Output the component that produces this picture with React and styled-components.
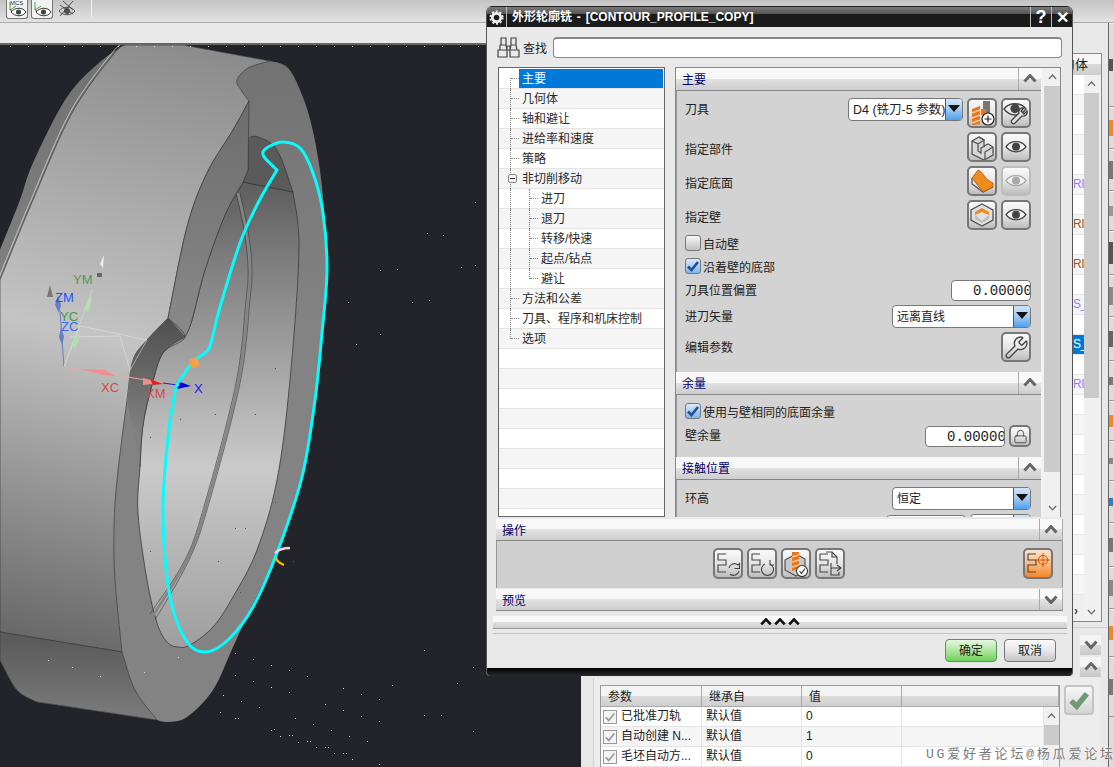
import React from 'react';
import styled, { createGlobalStyle } from 'styled-components';
import { Wrench, Lock } from 'lucide-react';

const GlobalStyle = createGlobalStyle`
  html, body { margin: 0; padding: 0; background: #e8e8e8; }
  body { font-family: "Liberation Sans", "Noto Sans CJK SC", sans-serif; font-size: 12px; color: #222; }
  * { box-sizing: border-box; }
`;

/* ---------- helpers for the model drawing ---------- */
const seg = (pts) => {
  if (pts.length === 2) return `L${pts[0][0]} ${pts[0][1]} L${pts[1][0]} ${pts[1][1]} `;
  let d = `L${pts[0][0]} ${pts[0][1]} `;
  for (let i = 0; i < pts.length - 1; i++) {
    const p0 = pts[i - 1] || pts[i];
    const p1 = pts[i];
    const p2 = pts[i + 1];
    const p3 = pts[i + 2] || p2;
    const c1x = p1[0] + (p2[0] - p0[0]) / 6;
    const c1y = p1[1] + (p2[1] - p0[1]) / 6;
    const c2x = p2[0] - (p3[0] - p1[0]) / 6;
    const c2y = p2[1] - (p3[1] - p1[1]) / 6;
    d += `C${c1x.toFixed(1)} ${c1y.toFixed(1)} ${c2x.toFixed(1)} ${c2y.toFixed(1)} ${p2[0]} ${p2[1]} `;
  }
  return d;
};
const shape = (...segs) => `M${segs[0][0][0]} ${segs[0][0][1]} ` + segs.map(seg).join('') + 'Z';
const line = (pts) => seg(pts).replace(/^L/, 'M');

const outerLeft = [[0, 250], [20, 200], [33, 163], [67, 97], [100, 62], [125, 45]];
const lightLeft = [[0, 280], [33, 200], [72, 113], [113, 55], [125, 45]];
const silhouette = shape(
  [[125, 45], [183, 45]],
  [[183, 45], [270, 61]],
  [[270, 61], [287, 67], [300, 90], [312, 127], [322, 187], [327, 270], [322, 333], [315, 400], [302, 477], [277, 553], [250, 610], [233, 647], [213, 690], [187, 717], [168, 722], [157, 720]],
  [[157, 720], [37, 702]],
  [[37, 702], [17, 690], [0, 660]],
  [[0, 660], [0, 250]],
  outerLeft
);
const cylinder = shape(
  [[125, 45], [183, 45]],
  [[183, 45], [270, 61]],
  [[270, 61], [248, 68], [237, 80], [241, 90], [249, 101]],
  [[249, 101], [233, 130], [207, 173], [187, 227], [168, 318]],
  [[168, 318], [147, 340], [133, 360], [127, 400], [117, 480], [114, 530], [115, 580], [122, 652]],
  [[122, 652], [0, 632]],
  [[0, 632], [0, 280]],
  lightLeft
);
const lowerBand = shape(
  [[122, 652], [0, 632]],
  [[0, 632], [0, 660]],
  [[0, 660], [17, 690], [37, 702]],
  [[37, 702], [157, 720]],
  [[157, 720], [135, 690], [122, 652]]
);
const holeEdge = [[293, 192], [299, 250], [290, 380], [277, 480], [257, 550], [233, 597], [213, 627], [190, 645], [178, 647], [167, 642], [157, 623], [147, 580], [138, 513], [140, 467], [143, 425], [152, 385], [163, 353], [185, 337]];
const hole = shape(
  [[243, 182], [293, 192]],
  holeEdge,
  [[185, 337], [192, 320], [205, 270], [225, 215], [243, 182]]
);
const holeTop = shape(
  [[248, 138], [258, 137], [277, 150], [293, 192]],
  [[293, 192], [243, 182]],
  [[243, 182], [248, 170]]
);
const wall = shape(
  [[249, 101], [248, 170]],
  [[248, 170], [243, 182]],
  [[243, 182], [225, 215], [205, 270], [192, 320], [185, 337]],
  [[185, 337], [168, 318]],
  [[168, 318], [187, 227], [207, 173], [233, 130], [249, 101]]
);
const notch = shape(
  [[168, 318], [185, 337]],
  [[185, 337], [163, 353], [152, 385], [143, 425], [140, 467]],
  [[140, 467], [127, 400]],
  [[127, 400], [133, 360], [147, 340], [168, 318]]
);
const toolPath = shape(
  [[277, 170], [265, 158], [263, 152], [270, 146], [283, 142], [300, 148], [313, 173], [323, 213], [327, 270], [322, 333], [315, 400], [302, 477], [277, 553], [253, 607], [230, 638], [207, 652], [187, 642], [170, 597], [163, 513], [168, 437], [175, 392], [180, 380], [193, 362], [208, 350], [213, 335], [220, 307], [240, 243], [258, 203], [277, 170]]
);

const makeDots = () => {
  const dots = [];
  for (let x = 10; x < 480; x += 11 + ((x * 7) % 9)) dots.push([x, 46]);
  const starts = [[235, 653], [235, 675], [223, 695], [220, 712], [235, 718], [262, 730]];
  starts.forEach(([sx, sy], r) => {
    for (let i = 0; i < 9; i++) {
      const x = sx + i * 18;
      const y = sy + i * 5.8;
      if (y < 767 && (i + r) % 6 !== 5) dots.push([Math.round(x), Math.round(y)]);
    }
  });
  [[475, 202], [443, 235], [427, 233], [397, 269], [380, 270], [461, 267], [475, 265], [348, 302], [412, 302], [429, 300], [380, 334], [356, 344], [324, 312], [424, 650], [473, 667], [457, 683], [441, 715], [424, 715], [473, 731], [392, 685], [275, 502], [275, 368], [215, 414], [255, 414], [180, 419], [150, 437], [293, 561], [235, 528], [245, 528], [218, 561], [240, 592], [150, 551], [40, 650], [48, 660], [72, 667], [100, 676], [144, 672], [178, 657]].forEach((d) => dots.push(d));
  return dots;
};
const dots = makeDots();

/* ---------- page frame ---------- */
const Page = styled.div`
  position: relative;
  width: 1114px;
  height: 767px;
  overflow: hidden;
  display: flex;
  flex-direction: column;
`;
const TopBar = styled.div`
  height: 23px;
  flex: none;
  display: flex;
  align-items: flex-start;
  gap: 3px;
  padding-left: 6px;
  background: linear-gradient(#c4c4c4, #e2e2e2);
  border-bottom: 1px solid #aaa;
  overflow: hidden;
`;
const TopIcon = styled.div`
  width: 22px;
  height: 19px;
  background: ${(p) => (p.$flat ? 'transparent' : '#f2f2f2')};
  border: ${(p) => (p.$flat ? 'none' : '1px solid #777')};
  border-top: none;
  border-radius: 0 0 3px 3px;
  display: flex;
  justify-content: center;
`;
const TopSep = styled.div`
  width: 1px;
  height: 17px;
  margin-left: 10px;
  background: #f4f4f4;
`;
const Main = styled.div`
  flex: 1;
  display: flex;
  min-height: 0;
`;
const LeftColumn = styled.div`
  width: 581px;
  flex: none;
  display: flex;
  flex-direction: column;
`;
const SubBar = styled.div`
  height: 22px;
  flex: none;
  background: #e9e9e9;
  border-bottom: 2px solid #666;
`;
const Viewport = styled.svg`
  flex: 1;
  display: block;
  background: #222429;
`;

/* ---------- side window under the dialog ---------- */
const SidePanel = styled.div`
  flex: 1;
  display: flex;
  background: #e8e8e8;
`;
const SideMain = styled.div`
  width: 527px;
  display: flex;
  flex-direction: column;
  padding-top: 30px;
`;
const ListBox = styled.div`
  height: 569px;
  margin: 0 6px 0 12px;
  border: 1px solid #888;
  background: #efefef;
  display: flex;
  flex-direction: column;
  flex: none;
  position: relative;
`;
const ListHeader = styled.div`
  height: 21px;
  flex: none;
  text-align: right;
  padding-right: 13px;
  line-height: 22px;
  font-size: 13px;
  background: linear-gradient(#f6f6f6 50%, #d8d8d8 50%, #cfcfcf);
`;
const ListBody = styled.div`
  flex: 1;
  display: flex;
  min-height: 0;
`;
const ListRows = styled.div`
  width: 490px;
  flex: none;
`;
const ListRow = styled.div`
  height: 20px;
  padding-left: 479px;
  background: ${(p) => (p.$odd ? '#f5f5f5' : '#fff')};
  border-bottom: 1px solid #e4e4e4;
  overflow: hidden;
`;
const ListText = styled.div`
  width: 11px;
  height: 19px;
  line-height: 19px;
  overflow: hidden;
  white-space: nowrap;
  font-size: 12px;
  letter-spacing: -0.5px;
  color: ${(p) => (p.$selected ? '#fff' : p.$color)};
  background: ${(p) => (p.$selected ? '#0078d7' : 'transparent')};
`;
const ScrollTrack = styled.div`
  width: ${(p) => p.$w || 16}px;
  flex: none;
  display: flex;
  flex-direction: column;
  align-items: center;
  background: #f0f0f0;
`;
const ScrollArrow = styled.div`
  height: ${(p) => p.$h || 18}px;
  flex: none;
  display: flex;
  align-items: center;
  justify-content: center;
`;
const ScrollThumb = styled.div`
  width: 100%;
  height: ${(p) => p.$h}px;
  flex: none;
  background: #cbcbcb;
`;
const ScrollSpacer = styled.div`
  flex: 1;
`;
const ListMark = styled.div`
  position: absolute;
  left: 480px;
  bottom: 4px;
  font-size: 12px;
  font-weight: 700;
  line-height: 12px;
  color: #444;
`;
const SideRule = styled.div`
  height: 1px;
  flex: none;
  margin: 5px 0 0 12px;
  background: #cfcfcf;
`;
const CollapseColumn = styled.div`
  flex: none;
  display: flex;
  flex-direction: column;
  align-items: flex-end;
  gap: 2px;
  padding: 7px 7px 0 0;
  height: 50px;
`;
const CollapseButton = styled.div`
  width: 21px;
  height: 20px;
  display: flex;
  align-items: center;
  justify-content: center;
  background: linear-gradient(#f4f4f4 50%, #d9d9d9 50%, #c9c9c9);
`;
const ParamPanel = styled.div`
  flex: 1;
  margin-left: 12px;
  margin-right: 7px;
  padding: 7px 0 0 6px;
  display: flex;
  gap: 4px;
  background: #ececec;
  border-left: 1px solid #d0d0d0;
`;
const ParamTable = styled.div`
  width: 460px;
  flex: none;
  border: 1px solid #999;
  border-bottom: none;
  background: #fff;
  display: flex;
  flex-direction: column;
`;
const ParamHead = styled.div`
  height: 21px;
  flex: none;
  display: grid;
  grid-template-columns: 101px 100px 100px 1fr;
  background: linear-gradient(#f4f4f4 50%, #dcdcdc 50%, #cfcfcf);
  border-bottom: 1px solid #aaa;
`;
const ParamHeadCell = styled.div`
  padding-left: 7px;
  line-height: 22px;
  border-right: 1px solid #aaa;
`;
const ParamBody = styled.div`
  flex: 1;
  display: flex;
`;
const ParamRows = styled.div`
  width: 443px;
  flex: none;
`;
const ParamRow = styled.div`
  height: 20px;
  display: grid;
  grid-template-columns: 101px 100px 100px 1fr;
  background: ${(p) => (p.$odd ? '#f5f5f5' : '#fff')};
  border-bottom: 1px solid #e4e4e4;
`;
const ParamCell = styled.div`
  display: flex;
  align-items: center;
  gap: 4px;
  padding-left: ${(p) => p.$pad ?? 4}px;
  line-height: 21px;
  border-right: 1px solid #e4e4e4;
  white-space: nowrap;
  overflow: hidden;
`;
const ParamCheck = styled.span`
  width: 14px;
  height: 14px;
  flex: none;
  border: 1px solid #999;
  background: #f4f4f4;
  display: flex;
  align-items: center;
  justify-content: center;
`;
const ApplyButton = styled.div`
  width: 30px;
  height: 30px;
  flex: none;
  border: 2px solid #c4c4c4;
  border-radius: 4px;
  background: linear-gradient(#f7f7f7, #d4d4d4);
  display: flex;
  align-items: center;
  justify-content: center;
`;
const ToolStrip = styled.div`
  flex: 1;
  border-left: 1px solid #666;
  display: flex;
  flex-direction: column;
  background: #dcdcdc;
  overflow: hidden;
`;
const StripSlot = styled.div`
  height: ${(p) => p.$h}px;
  flex: none;
  border-bottom: 1px solid #999;
  border-top: 1px solid #f4f4f4;
  display: flex;
  align-items: center;
`;
const StripMark = styled.div`
  width: 4px;
  height: ${(p) => p.$h || 14}px;
  background: ${(p) => p.$color};
`;

/* ---------- dialog ---------- */
const Dialog = styled.div`
  position: absolute;
  left: 486px;
  top: 6px;
  width: 587px;
  height: 670px;
  display: flex;
  flex-direction: column;
  background: #e9e9e9;
  border-radius: 6px 6px 4px 4px;
  overflow: hidden;
  border-left: 1px solid #555;
  border-right: 1px solid #555;
`;
const TitleBar = styled.div`
  height: 21px;
  flex: none;
  display: flex;
  align-items: center;
  background: linear-gradient(#7a7a7a, #555 35%, #1b1b1b 36%, #1b1b1b);
  border-top: 1px solid #222;
`;
const GearBox = styled.div`
  width: 20px;
  height: 100%;
  display: flex;
  align-items: center;
  justify-content: center;
  border-right: 1px solid #bbb;
`;
const TitleText = styled.div`
  flex: 1;
  padding-left: 5px;
  color: #fff;
  font-weight: 700;
  font-size: 12px;
  line-height: 17px;
  word-spacing: 1.5px;
`;
const TitleButton = styled.div`
  width: 21px;
  height: 100%;
  display: flex;
  align-items: center;
  justify-content: center;
  border-left: 1px solid #bbb;
  color: #fff;
  font-weight: 700;
  font-size: ${(p) => p.$size}px;
`;
const DialogBody = styled.div`
  flex: 1;
  min-height: 0;
  display: flex;
  flex-direction: column;
`;
const FindRow = styled.div`
  height: 21px;
  flex: none;
  margin: 10px 10px 0 10px;
  display: flex;
  align-items: center;
`;
const FindLabel = styled.span`
  width: 30px;
  margin-left: 3px;
  font-size: 12px;
`;
const FindInput = styled.div`
  flex: 1;
  height: 21px;
  background: #fff;
  border: 1px solid #888;
  border-top-width: 2px;
  border-radius: 4px;
`;
const ContentRow = styled.div`
  height: 450px;
  flex: none;
  margin: 9px 0 0 11px;
  display: flex;
  gap: 10px;
`;
const Tree = styled.div`
  position: relative;
  width: 167px;
  flex: none;
  border: 1px solid #666;
  padding-top: 1px;
  background: #fff;
  overflow: hidden;
`;
const TreeRow = styled.div`
  position: relative;
  height: 20px;
  display: flex;
  padding-right: 1px;
  background: ${(p) => (p.$odd ? '#f5f5f5' : '#fff')};
  border-bottom: 1px solid #e4e4e4;
`;
const TreeLabel = styled.div`
  flex: 1;
  margin-left: ${(p) => (p.$level === 2 ? 39 : 20)}px;
  padding-left: 3px;
  line-height: 21px;
  color: ${(p) => (p.$selected ? '#fff' : '#2a2a2a')};
  background: ${(p) => (p.$selected ? '#0078d7' : 'transparent')};
`;
const HLine = styled.span`
  position: absolute;
  left: ${(p) => p.$x}px;
  top: 9px;
  width: 8px;
  border-top: 1px dotted #888;
`;
const VLine = styled.span`
  position: absolute;
  left: ${(p) => p.$x}px;
  top: ${(p) => p.$top}px;
  height: ${(p) => p.$h}px;
  border-left: 1px dotted #888;
`;
const Expander = styled.span`
  position: absolute;
  left: 9px;
  top: 5px;
  width: 9px;
  height: 9px;
  background: #f4f4f4;
  border: 1px solid #888;
  border-radius: 2px;
  &::after {
    content: '';
    position: absolute;
    left: 1px;
    top: 3px;
    width: 5px;
    height: 1px;
    background: #333;
  }
`;
const Pane = styled.div`
  width: 386px;
  flex: none;
  display: flex;
  gap: 3px;
  border: 1px solid #888;
  border-bottom: none;
  background: #f2f2f2;
  overflow: hidden;
`;
const Sections = styled.div`
  width: 365px;
  flex: none;
`;
const SectionHeader = styled.div`
  height: 23px;
  display: flex;
  background: linear-gradient(#f8f8f8 50%, #e2e2e2 50%, #cdcdcd);
  border-bottom: 1px solid #888;
`;
const SectionTitle = styled.div`
  flex: 1;
  padding-left: 6px;
  line-height: 24px;
  color: #000066;
`;
const SectionToggle = styled.div`
  width: 23px;
  flex: none;
  display: flex;
  align-items: center;
  justify-content: center;
  border-left: 1px solid #aaa;
`;
const SectionBody = styled.div`
  background: #d3d3d3;
  border-left: 1px solid #999;
  padding: ${(p) => p.$pt}px 10px ${(p) => p.$pb}px 8px;
  display: flex;
  flex-direction: column;
  gap: 4px;
`;
const Row = styled.div`
  height: ${(p) => p.$h}px;
  flex: none;
  display: flex;
  align-items: ${(p) => (p.$top ? 'flex-start' : 'center')};
  gap: 4px;
`;
const RowLabel = styled.div`
  flex: 1;
  line-height: ${(p) => (p.$tall ? '24px' : '18px')};
  margin-top: ${(p) => p.$mt ?? 1}px;
`;
const Select = styled.div`
  width: ${(p) => p.$w}px;
  height: 23px;
  flex: none;
  display: flex;
  background: #fff;
  border: 1px solid #777;
  border-radius: 4px;
  overflow: hidden;
`;
const SelectText = styled.div`
  flex: 1;
  padding-left: 4px;
  line-height: 22px;
  font-size: ${(p) => p.$size || 12}px;
  white-space: nowrap;
  overflow: hidden;
`;
const SelectArrow = styled.div`
  width: 17px;
  flex: none;
  display: flex;
  align-items: flex-start;
  justify-content: center;
  padding-top: 6px;
  border-left: 1px solid #2a62a8;
  background: linear-gradient(#cfe3f8, #a8cef4 45%, #4f9fee);
`;
const ArrowGlyph = styled.span`
  width: 0;
  height: 0;
  border-left: 6px solid transparent;
  border-right: 6px solid transparent;
  border-top: 7px solid #111;
`;
const NumberField = styled.div`
  width: 80px;
  height: ${(p) => p.$h || 21}px;
  flex: none;
  padding-left: 21px;
  background: #fff;
  border: 1px solid #777;
  border-radius: 4px;
  font-family: "Liberation Mono", monospace;
  font-size: 14px;
  line-height: 20px;
  overflow: hidden;
  white-space: nowrap;
`;
const IconButton = styled.div`
  width: ${(p) => p.$w || 30}px;
  height: ${(p) => p.$hh || 30}px;
  flex: none;
  display: flex;
  align-items: center;
  justify-content: center;
  color: #444;
  border: 2px solid ${(p) => (p.$faded ? '#bdbdbd' : '#777')};
  border-radius: 5px;
  background: ${(p) =>
    p.$active
      ? 'linear-gradient(#fbe6d0 0, #f9c08a 45%, #f5862a)'
      : 'linear-gradient(#fafafa, #e6e6e6 50%, #bdbdbd)'};
`;
const CheckRow = styled.div`
  height: ${(p) => p.$h}px;
  flex: none;
  display: flex;
  align-items: center;
  gap: 2px;
`;
const CheckBox = styled.span`
  width: 16px;
  height: 16px;
  flex: none;
  display: flex;
  align-items: center;
  justify-content: center;
  border: 1px solid #777;
  border-radius: 3px;
  background: ${(p) =>
    p.$checked ? 'linear-gradient(#dbe9f8, #7db4ea)' : 'linear-gradient(#f8f8f8, #bfbfbf)'};
`;
const OpsBlock = styled.div`
  width: 567px;
  flex: none;
  margin: 2px 0 0 9px;
  background: #e9e9e9;
`;
const OpsHeader = styled.div`
  height: 22px;
  display: flex;
  background: linear-gradient(#f8f8f8 50%, #e2e2e2 50%, #cdcdcd);
  border-bottom: 1px solid #888;
  border-right: 1px solid #aaa;
`;
const OpsBody = styled.div`
  height: 47px;
  display: flex;
  padding: 7px 9px 0 216px;
  gap: 4px;
  background: #cfcfcf;
  border-left: 1px solid #999;
  border-right: 1px solid #999;
`;
const OpsSpacer = styled.div`
  flex: 1;
`;
const PreviewHeader = styled(OpsHeader)`
  margin-top: 1px;
`;
const MoreBar = styled.div`
  width: 574px;
  height: 13px;
  flex: none;
  margin: 5px 0 0 6px;
  display: flex;
  align-items: center;
  justify-content: center;
  gap: 2px;
  background: linear-gradient(#f8f8f8 50%, #e0e0e0 50%, #cfcfcf);
  border-bottom: 1px solid #999;
`;
const DialogRule = styled.div`
  width: 574px;
  height: 1px;
  flex: none;
  margin: 4px 0 0 6px;
  background: #c4c4c4;
`;
const ButtonRow = styled.div`
  flex: none;
  margin-top: 5px;
  padding-right: 16px;
  display: flex;
  justify-content: flex-end;
  gap: 7px;
`;
const DialogButton = styled.div`
  width: 52px;
  height: 23px;
  text-align: center;
  line-height: 23px;
  border: 1px solid ${(p) => (p.$ok ? '#5f8f5a' : '#777')};
  border-radius: 4px;
  background: ${(p) =>
    p.$ok
      ? 'linear-gradient(#e6f6e0, #b6e8a6 45%, #6fd15c)'
      : 'linear-gradient(#fafafa, #e8e8e8 50%, #c4c4c4)'};
`;
const BottomBand = styled.div`
  height: 8px;
  flex: none;
  background: linear-gradient(#000, #2a2a2a);
`;
const Watermark = styled.div`
  position: absolute;
  right: 0;
  bottom: 4px;
  width: 188px;
  font-family: "Liberation Mono", "Noto Sans CJK SC", monospace;
  font-size: 13px;
  line-height: 16px;
  letter-spacing: 2.8px;
  white-space: nowrap;
  color: #7c7c7c;
  text-shadow: 0 0 2px #fff;
`;

/* ---------- drawn icons ---------- */
const Chevron = ({ down, size = 14, weight = 3, color = '#666' }) => (
  <svg width={size} height={size * 0.65} viewBox="0 0 14 9">
    <polyline
      points={down ? '1.5,1.5 7,7.5 12.5,1.5' : '1.5,7.5 7,1.5 12.5,7.5'}
      fill="none"
      stroke={color}
      strokeWidth={weight}
    />
  </svg>
);

const Eye = ({ faded, size = 22 }) => (
  <svg width={size} height={size * 0.7} viewBox="0 0 24 17">
    <path d="M1 8.5C6 1 18 1 23 8.5C18 16 6 16 1 8.5Z" fill="#f2f2f2" stroke={faded ? '#aaa' : '#444'} strokeWidth="1.4" />
    <circle cx="12" cy="8.5" r="4.4" fill={faded ? '#aaa' : '#444'} />
  </svg>
);

const Gear = () => (
  <svg width="15" height="15" viewBox="0 0 16 16">
    <circle cx="8" cy="8" r="4.5" fill="none" stroke="#eee" strokeWidth="3" />
    <circle cx="8" cy="8" r="6.6" fill="none" stroke="#eee" strokeWidth="2" strokeDasharray="2.2 2" />
  </svg>
);

const Binoculars = () => (
  <svg width="23" height="23" viewBox="0 0 23 23" fill="none" stroke="#444" strokeWidth="1.2">
    <path d="M4 2h5v7H4zM14 2h5v7h-5zM3 9l1 0h5l1 5H3zM13 14l1-5h5l1 5zM1 14h9v7H1zM13 14h9v7h-9zM10 10h3v4h-3z" />
  </svg>
);

const Check = ({ color = '#1f4f96', size = 14, weight = 2.6 }) => (
  <svg width={size} height={size} viewBox="0 0 14 14">
    <polyline points="2,7.5 5.5,11 12,3" fill="none" stroke={color} strokeWidth={weight} />
  </svg>
);

const CreateToolIcon = () => (
  <svg width="26" height="26" viewBox="0 0 26 26">
    <rect x="14" y="1" width="7" height="12" fill="#777" />
    <path d="M3 9l8-3v18l-8 1z" fill="#e8761c" />
    <path d="M3 13l8-3M3 18l8-3M3 23l8-3" stroke="#f4c9a0" strokeWidth="1.5" />
    <rect x="12" y="9" width="5" height="6" fill="#e8761c" />
    <circle cx="19" cy="19" r="6" fill="#fff" stroke="#222" strokeWidth="1.2" />
    <path d="M19 15.5v7M15.5 19h7" stroke="#222" strokeWidth="1.2" />
  </svg>
);

const EyeWrenchIcon = () => (
  <svg width="26" height="26" viewBox="0 0 26 26" fill="none" stroke="#444" strokeWidth="1.3">
    <path d="M1 9C6 2 18 2 23 9C20 13 16 15 12 15C8 15 4 13 1 9Z" />
    <circle cx="12" cy="8.5" r="4" fill="#444" />
    <path d="M24 11a4 4 0 0 1-5 5l-7 7a2 2 0 0 1-3-3l7-7a4 4 0 0 1 5-5l-3 3 3 3z" fill="#e2e2e2" />
  </svg>
);

const PartIcon = () => (
  <svg width="26" height="26" viewBox="0 0 26 26" fill="#d8d8d8" stroke="#555" strokeWidth="1.3">
    <path d="M3 7l7-4 5 3v6l4-2 5 3v8l-9 5-12-6z" />
    <path d="M3 7l6 3v7l3 2v-5l4-2M10 3l5 3-6 4M16 25v-7l8-5" fill="none" />
  </svg>
);

const FloorIcon = () => (
  <svg width="26" height="26" viewBox="0 0 26 26">
    <path d="M3 10v6l11 8 10-5" fill="#e4e4e4" stroke="#555" strokeWidth="1.3" />
    <path d="M3 10L9 2c5 1 6 9 15 13v4l-10 5z" fill="#ee8a1e" stroke="#a85a10" strokeWidth="0.8" />
  </svg>
);

const WallIcon = () => (
  <svg width="26" height="26" viewBox="0 0 26 26">
    <path d="M13 2l11 6v10l-11 6-11-6V8z" fill="#e0e0e0" stroke="#555" strokeWidth="1.3" />
    <path d="M13 6l7 4v3l-7-3-7 3v-3z" fill="#ee8a1e" />
    <path d="M6 13l7 6 7-6v4l-7 4-7-4z" fill="#bcbcbc" />
  </svg>
);

const Flow = () => (
  <path d="M11 3H3v6h8v5H3v7h8" fill="none" stroke="#444" strokeWidth="1.1" />
);

const RegenIcon = () => (
  <svg width="26" height="26" viewBox="0 0 26 26" fill="none" stroke="#444" strokeWidth="1.1">
    <Flow />
    <path d="M14 17a5.5 5.5 0 0 1 9-3l1.5-1.5v5h-5M24 20a5.5 5.5 0 0 1-9 3" />
  </svg>
);

const ReplayIcon = () => (
  <svg width="26" height="26" viewBox="0 0 26 26" fill="none" stroke="#444" strokeWidth="1.1">
    <Flow />
    <path d="M21 13a6 6 0 1 1-5 0M21 9v5h4" />
  </svg>
);

const VerifyIcon = () => (
  <svg width="26" height="26" viewBox="0 0 26 26">
    <path d="M2 9l11-6 9 5v11l-9 6-11-6z" fill="#c8c8c8" stroke="#555" strokeWidth="1.2" />
    <path d="M9 1h7v17l-7 2z" fill="#e8761c" />
    <path d="M9 6l7-2M9 11l7-2M9 16l7-2" stroke="#f4c9a0" strokeWidth="1.4" />
    <circle cx="19" cy="20" r="5.5" fill="#fff" stroke="#333" strokeWidth="1.1" />
    <polyline points="16.5,20 18.5,22.5 22,17.5" fill="none" stroke="#333" strokeWidth="1.2" />
  </svg>
);

const ListIcon = () => (
  <svg width="26" height="26" viewBox="0 0 26 26" fill="none" stroke="#444" strokeWidth="1.1">
    <Flow />
    <path d="M9 1h6l5 5v7M15 1v5h5M14 17h9M20 14l4 3-4 3M14 12v12h8v-3" />
  </svg>
);

const PathCrossIcon = () => (
  <svg width="26" height="26" viewBox="0 0 26 26" fill="none" stroke="#333" strokeWidth="1.1">
    <Flow />
    <circle cx="18" cy="9" r="4.5" stroke="#d85c00" />
    <path d="M18 2v14M11 9h14" stroke="#d85c00" />
  </svg>
);

const TopMcsIcon = ({ mcs }) => (
  <svg width="20" height="18" viewBox="0 0 20 18">
    {mcs && (
      <text x="3" y="5" fontSize="6" fontFamily="Liberation Sans" fill="#333">
        MCS
      </text>
    )}
    <path d="M3 10L9 6M3 2v8" stroke="#2a9a3c" strokeWidth="0.9" fill="none" />
    <path d="M3 10l5 2" stroke="#c03030" strokeWidth="0.9" />
    <path d="M4 12C8 7 16 7 19 12C16 17 8 17 4 12Z" fill="#fff" stroke="#333" strokeWidth="1" />
    <circle cx="11.5" cy="12" r="2.6" fill="#444" />
  </svg>
);

const TopHiddenIcon = () => (
  <svg width="18" height="18" viewBox="0 0 18 18" fill="none" stroke="#444" strokeWidth="0.9">
    <path d="M1 11C5 6 13 6 17 11C13 16 5 16 1 11Z" />
    <circle cx="9" cy="11" r="2.6" fill="#555" />
    <path d="M2 16L15 1M2 5l13 9M5 1l10 9" />
  </svg>
);

/* ---------- data ---------- */
const treeItems = [
  { label: '主要', level: 1, selected: true },
  { label: '几何体', level: 1 },
  { label: '轴和避让', level: 1 },
  { label: '进给率和速度', level: 1 },
  { label: '策略', level: 1 },
  { label: '非切削移动', level: 1, expander: true },
  { label: '进刀', level: 2 },
  { label: '退刀', level: 2 },
  { label: '转移/快速', level: 2 },
  { label: '起点/钻点', level: 2 },
  { label: '避让', level: 2, lastChild: true },
  { label: '方法和公差', level: 1 },
  { label: '刀具、程序和机床控制', level: 1 },
  { label: '选项', level: 1, lastRoot: true },
  ...Array.from({ length: 9 }, () => ({ label: '', level: 0 }))
];

const listMarks = {
  5: { text: 'RI', color: '#9a7cff' },
  7: { text: 'RI', color: '#9c5a20' },
  9: { text: 'RI', color: '#9c5a20' },
  11: { text: 'S_', color: '#9a7cff' },
  13: { text: 'S_', color: '#fff', selected: true },
  15: { text: 'RI', color: '#9a7cff' }
};

const params = [
  { name: '已批准刀轨', from: '默认值', value: '0' },
  { name: '自动创建 N...', from: '默认值', value: '1' },
  { name: '毛坯自动方...', from: '默认值', value: '0' }
];

const strip = [
  { h: 84, color: '#555', mh: 12 },
  { h: 42, color: '#ee8a1e', mh: 16 },
  { h: 42, color: '#777', mh: 18 },
  { h: 40, color: '#999', mh: 10 },
  { h: 44, color: '#555', mh: 22 },
  { h: 42, color: '#888', mh: 18 },
  { h: 44, color: '#666', mh: 16 },
  { h: 40, color: '#777', mh: 8 },
  { h: 40, color: '#ee8a1e', mh: 12 },
  { h: 40, color: '#888', mh: 6 },
  { h: 42, color: '#2a7fd0', mh: 8 },
  { h: 44, color: '#777', mh: 14 },
  { h: 42, color: '#888', mh: 16 },
  { h: 48, color: '#ee8a1e', mh: 14 },
  { h: 60, color: '#777', mh: 16 }
];

/* ---------- pieces ---------- */
const ModelView = () => (
  <Viewport viewBox="0 45 581 722" preserveAspectRatio="xMinYMin slice">
    <defs>
      <linearGradient id="cyl" gradientUnits="userSpaceOnUse" x1="200" y1="50" x2="60" y2="640">
        <stop offset="0" stopColor="#8c8c8c" />
        <stop offset="0.5" stopColor="#c4c4c4" />
        <stop offset="1" stopColor="#6a6a6a" />
      </linearGradient>
      <linearGradient id="band" gradientUnits="userSpaceOnUse" x1="0" y1="640" x2="0" y2="720">
        <stop offset="0" stopColor="#5b5b5b" />
        <stop offset="1" stopColor="#7c7c7c" />
      </linearGradient>
      <linearGradient id="face" gradientUnits="userSpaceOnUse" x1="0" y1="60" x2="0" y2="330">
        <stop offset="0" stopColor="#727272" />
        <stop offset="1" stopColor="#838383" />
      </linearGradient>
      <linearGradient id="bore" gradientUnits="userSpaceOnUse" x1="0" y1="185" x2="0" y2="640">
        <stop offset="0" stopColor="#5e5e5e" />
        <stop offset="0.17" stopColor="#7e7e7e" />
        <stop offset="0.62" stopColor="#cacaca" />
        <stop offset="1" stopColor="#a0a0a0" />
      </linearGradient>
      <linearGradient id="wallGrad" gradientUnits="userSpaceOnUse" x1="0" y1="100" x2="0" y2="340">
        <stop offset="0" stopColor="#6c6c6c" />
        <stop offset="1" stopColor="#8a8a8a" />
      </linearGradient>
      <linearGradient id="notchGrad" gradientUnits="userSpaceOnUse" x1="0" y1="320" x2="0" y2="430">
        <stop offset="0" stopColor="#505050" />
        <stop offset="1" stopColor="#808080" />
      </linearGradient>
    </defs>

    <path d={silhouette} fill="url(#face)" />
    <path d={cylinder} fill="url(#cyl)" stroke="#3c3c3c" strokeWidth="0.7" />
    <path d={line(lightLeft.map(([x, y]) => [x - 1.5, y - 1.5]))} fill="none" stroke="#e4e4e4" strokeWidth="0.7" />
    <path d={lowerBand} fill="url(#band)" stroke="#3c3c3c" strokeWidth="0.7" />
    <path d={hole} fill="url(#bore)" stroke="#3a3a3a" strokeWidth="0.8" />
    <path d={holeTop} fill="#5a5a5a" stroke="#3a3a3a" strokeWidth="0.8" />
    <path d={wall} fill="url(#wallGrad)" stroke="#3c3c3c" strokeWidth="0.7" />
    <path d={notch} fill="url(#notchGrad)" />
    <path d={line([[168, 318], [185, 337], [163, 353], [152, 385], [143, 425], [140, 467]])} fill="none" stroke="#3c3c3c" strokeWidth="0.7" />

    <path d={line([[238, 193], [246, 230], [250, 267], [248, 300], [238, 383], [207, 503], [187, 560], [152, 617]])} fill="none" stroke="#858585" strokeWidth="2.6" />
    <path d={line([[236, 193], [244, 230], [248, 267], [246, 300], [236, 383], [205, 503], [185, 560], [150, 614]])} fill="none" stroke="#454545" strokeWidth="0.7" />
    <path d={line([[240, 193], [248, 230], [252, 267], [250, 300], [240, 383], [209, 503], [189, 560], [155, 620]])} fill="none" stroke="#454545" strokeWidth="0.7" />

    {dots.map(([x, y], i) => (
      <rect key={i} x={x} y={y} width="1" height="1" fill={y < 50 || x > 320 || y > 650 ? '#d8d8d8' : '#555'} />
    ))}

    <g fill="none" stroke="#e8e8e8" strokeWidth="0.7" opacity="0.75">
      <path d="M64 367L80 326L147 340L129 372" />
      <path d="M70 337L120 336L130 370" />
    </g>
    <path d="M64 367L60 310" stroke="#6a7fc0" strokeWidth="1" />
    <path d="M59 337l2-10 3 10-2 8zM55 305l3-10 3 10-2 8z" fill="#6680c8" />
    <path d="M64 367L92 290" stroke="#bfe0bf" strokeWidth="1" />
    <path d="M72 345l4-9 4 1-5 12zM85 310l6-19 1 10-4 11z" fill="#b4dcb0" />
    <path d="M64 367L165 383" stroke="#eba8a8" strokeWidth="1" />
    <path d="M80 369l25 1 10 6-12-1zM143 378l20 5-20 2z" fill="#f08e8e" />
    <path d="M150 379l13 5-10 1z" fill="#e02020" />
    <path d="M163 383L177 385" stroke="#2222cc" strokeWidth="1" />
    <path d="M177 381l14 5-14 3z" fill="#0000dd" />
    <rect x="176" y="383" width="3" height="3" fill="#fff" />
    <path d="M100 264l4-9-1 13z" fill="#eee" />
    <rect x="97" y="273" width="5" height="4" fill="#666" />
    <path d="M50 285l3 12h-6z" fill="#777" />
    <g fontFamily="Liberation Sans" fontSize="13">
      <text x="73" y="284" fill="#559955">YM</text>
      <text x="55" y="302" fill="#2255ff">ZM</text>
      <text x="60" y="321" fill="#4a9a4a">YC</text>
      <text x="61" y="331" fill="#3a6aff">ZC</text>
      <text x="101" y="392" fill="#d84848">XC</text>
      <text x="146" y="398" fill="#d84848">XM</text>
      <text x="194" y="393" fill="#1a1ae8">X</text>
    </g>

    <path d={toolPath} fill="none" stroke="#00ffff" strokeWidth="3" strokeLinejoin="round" />
    <circle cx="194" cy="363" r="5" fill="#f5a04a" />
    <path d="M275 553C279 549 284 548 290 548" fill="none" stroke="#f5d0dc" strokeWidth="2.4" />
    <path d="M276 557C276 561 279 563 284 565" fill="none" stroke="#f5b800" strokeWidth="2.4" />
  </Viewport>
);

const SideWindow = () => (
  <SidePanel>
    <SideMain>
      <ListBox>
        <ListHeader>刀体</ListHeader>
        <ListBody>
          <ListRows>
            {Array.from({ length: 26 }, (_, i) => (
              <ListRow key={i} $odd={i % 2 === 1}>
                {listMarks[i] && (
                  <ListText $color={listMarks[i].color} $selected={listMarks[i].selected}>
                    {listMarks[i].text}
                  </ListText>
                )}
              </ListRow>
            ))}
          </ListRows>
          <ScrollTrack $w={15}>
            <ScrollArrow $h={18}>
              <Chevron size={9} weight={2} />
            </ScrollArrow>
            <ScrollThumb $h={305} />
            <ScrollSpacer />
            <ScrollArrow $h={18}>
              <Chevron down size={9} weight={2} />
            </ScrollArrow>
          </ScrollTrack>
        </ListBody>
        <ListMark>›</ListMark>
      </ListBox>
      <SideRule />
      <CollapseColumn>
        <CollapseButton>
          <Chevron down />
        </CollapseButton>
        <CollapseButton>
          <Chevron />
        </CollapseButton>
      </CollapseColumn>
      <ParamPanel>
        <ParamTable>
          <ParamHead>
            <ParamHeadCell>参数</ParamHeadCell>
            <ParamHeadCell>继承自</ParamHeadCell>
            <ParamHeadCell>值</ParamHeadCell>
            <ParamHeadCell />
          </ParamHead>
          <ParamBody>
            <ParamRows>
              {params.map((p, i) => (
                <ParamRow key={p.name} $odd={i % 2 === 1}>
                  <ParamCell $pad={2}>
                    <ParamCheck>
                      <Check color="#999" size={12} weight={2} />
                    </ParamCheck>
                    {p.name}
                  </ParamCell>
                  <ParamCell>{p.from}</ParamCell>
                  <ParamCell>{p.value}</ParamCell>
                  <ParamCell />
                </ParamRow>
              ))}
            </ParamRows>
            <ScrollTrack $w={15}>
              <ScrollArrow $h={18}>
                <Chevron size={9} weight={2} />
              </ScrollArrow>
              <ScrollThumb $h={20} />
            </ScrollTrack>
          </ParamBody>
        </ParamTable>
        <ApplyButton>
          <Check color="#6e9a72" size={22} weight={3.4} />
        </ApplyButton>
      </ParamPanel>
    </SideMain>
    <ToolStrip>
      {strip.map((s, i) => (
        <StripSlot key={i} $h={s.h}>
          <StripMark $color={s.color} $h={s.mh} />
        </StripSlot>
      ))}
    </ToolStrip>
  </SidePanel>
);

const OperationDialog = () => (
  <Dialog>
    <TitleBar>
      <GearBox>
        <Gear />
      </GearBox>
      <TitleText>外形轮廓铣 - [CONTOUR_PROFILE_COPY]</TitleText>
      <TitleButton $size={18}>?</TitleButton>
      <TitleButton $size={16}>✕</TitleButton>
    </TitleBar>
    <DialogBody>
      <FindRow>
        <Binoculars />
        <FindLabel>查找</FindLabel>
        <FindInput />
      </FindRow>
      <ContentRow>
        <Tree>
          {treeItems.map((item, i) => (
            <TreeRow key={i} $odd={i % 2 === 1}>
              {item.level > 0 && !item.lastRoot && <VLine $x={11} $top={i === 0 ? 9 : 0} $h={i === 0 ? 11 : 20} />}
              {item.lastRoot && <VLine $x={11} $top={0} $h={10} />}
              {item.level === 1 && !item.expander && <HLine $x={12} />}
              {item.level === 2 && <VLine $x={30} $top={0} $h={item.lastChild ? 10 : 20} />}
              {item.level === 2 && <HLine $x={31} />}
              {item.expander && <Expander />}
              <TreeLabel $level={item.level} $selected={item.selected}>
                {item.label}
              </TreeLabel>
            </TreeRow>
          ))}
        </Tree>
        <Pane>
          <Sections>
            <SectionHeader>
              <SectionTitle>主要</SectionTitle>
              <SectionToggle>
                <Chevron />
              </SectionToggle>
            </SectionHeader>
            <SectionBody $pt={7} $pb={10}>
              <Row $h={30} $top>
                <RowLabel $tall $mt={0}>刀具</RowLabel>
                <Select $w={115}>
                  <SelectText $size={12.5}>D4 (铣刀-5 参数)</SelectText>
                  <SelectArrow>
                    <ArrowGlyph />
                  </SelectArrow>
                </Select>
                <IconButton>
                  <CreateToolIcon />
                </IconButton>
                <IconButton>
                  <EyeWrenchIcon />
                </IconButton>
              </Row>
              <Row $h={30}>
                <RowLabel $mt={6}>指定部件</RowLabel>
                <IconButton>
                  <PartIcon />
                </IconButton>
                <IconButton>
                  <Eye />
                </IconButton>
              </Row>
              <Row $h={30}>
                <RowLabel $mt={5}>指定底面</RowLabel>
                <IconButton>
                  <FloorIcon />
                </IconButton>
                <IconButton $faded>
                  <Eye faded />
                </IconButton>
              </Row>
              <Row $h={30}>
                <RowLabel $mt={6}>指定壁</RowLabel>
                <IconButton>
                  <WallIcon />
                </IconButton>
                <IconButton>
                  <Eye />
                </IconButton>
              </Row>
              <CheckRow $h={18}>
                <CheckBox />
                自动壁
              </CheckRow>
              <CheckRow $h={20}>
                <CheckBox $checked>
                  <Check />
                </CheckBox>
                沿着壁的底部
              </CheckRow>
              <Row $h={21}>
                <RowLabel>刀具位置偏置</RowLabel>
                <NumberField>0.00000</NumberField>
              </Row>
              <Row $h={23}>
                <RowLabel>进刀矢量</RowLabel>
                <Select $w={139}>
                  <SelectText>远离直线</SelectText>
                  <SelectArrow>
                    <ArrowGlyph />
                  </SelectArrow>
                </Select>
              </Row>
              <Row $h={30}>
                <RowLabel>编辑参数</RowLabel>
                <IconButton>
                  <Wrench size={25} strokeWidth={1.3} />
                </IconButton>
              </Row>
            </SectionBody>
            <SectionHeader>
              <SectionTitle>余量</SectionTitle>
              <SectionToggle>
                <Chevron />
              </SectionToggle>
            </SectionHeader>
            <SectionBody $pt={6} $pb={10}>
              <CheckRow $h={20}>
                <CheckBox $checked>
                  <Check />
                </CheckBox>
                使用与壁相同的底面余量
              </CheckRow>
              <Row $h={22}>
                <RowLabel $mt={0}>壁余量</RowLabel>
                <NumberField>0.00000</NumberField>
                <IconButton $w={22} $hh={22}>
                  <Lock size={15} strokeWidth={1.4} />
                </IconButton>
              </Row>
            </SectionBody>
            <SectionHeader>
              <SectionTitle>接触位置</SectionTitle>
              <SectionToggle>
                <Chevron />
              </SectionToggle>
            </SectionHeader>
            <SectionBody $pt={7} $pb={4}>
              <Row $h={23}>
                <RowLabel>环高</RowLabel>
                <Select $w={139}>
                  <SelectText>恒定</SelectText>
                  <SelectArrow>
                    <ArrowGlyph />
                  </SelectArrow>
                </Select>
              </Row>
              <Row $h={23}>
                <RowLabel />
                <NumberField />
                <Select $w={61}>
                  <SelectText />
                  <SelectArrow />
                </Select>
              </Row>
            </SectionBody>
          </Sections>
          <ScrollTrack>
            <ScrollArrow>
              <Chevron size={9} weight={2} />
            </ScrollArrow>
            <ScrollThumb $h={386} />
            <ScrollSpacer />
            <ScrollArrow>
              <Chevron down size={9} weight={2} />
            </ScrollArrow>
          </ScrollTrack>
        </Pane>
      </ContentRow>
      <OpsBlock>
        <OpsHeader>
          <SectionTitle>操作</SectionTitle>
          <SectionToggle>
            <Chevron />
          </SectionToggle>
        </OpsHeader>
        <OpsBody>
          <IconButton $hh={31}>
            <RegenIcon />
          </IconButton>
          <IconButton $hh={31}>
            <ReplayIcon />
          </IconButton>
          <IconButton $hh={31}>
            <VerifyIcon />
          </IconButton>
          <IconButton $hh={31}>
            <ListIcon />
          </IconButton>
          <OpsSpacer />
          <IconButton $hh={31} $active>
            <PathCrossIcon />
          </IconButton>
        </OpsBody>
        <PreviewHeader>
          <SectionTitle>预览</SectionTitle>
          <SectionToggle>
            <Chevron down />
          </SectionToggle>
        </PreviewHeader>
      </OpsBlock>
      <MoreBar>
        <Chevron size={12} color="#111" />
        <Chevron size={12} color="#111" />
        <Chevron size={12} color="#111" />
      </MoreBar>
      <DialogRule />
      <ButtonRow>
        <DialogButton $ok>确定</DialogButton>
        <DialogButton>取消</DialogButton>
      </ButtonRow>
    </DialogBody>
    <BottomBand />
  </Dialog>
);

const App = () => (
  <Page>
    <GlobalStyle />
    <TopBar>
      <TopIcon>
        <TopMcsIcon mcs />
      </TopIcon>
      <TopIcon>
        <TopMcsIcon />
      </TopIcon>
      <TopIcon $flat>
        <TopHiddenIcon />
      </TopIcon>
      <TopSep />
    </TopBar>
    <Main>
      <LeftColumn>
        <SubBar />
        <ModelView />
      </LeftColumn>
      <SideWindow />
    </Main>
    <OperationDialog />
    <Watermark>UG爱好者论坛@杨瓜爱论坛</Watermark>
  </Page>
);

export default App;
